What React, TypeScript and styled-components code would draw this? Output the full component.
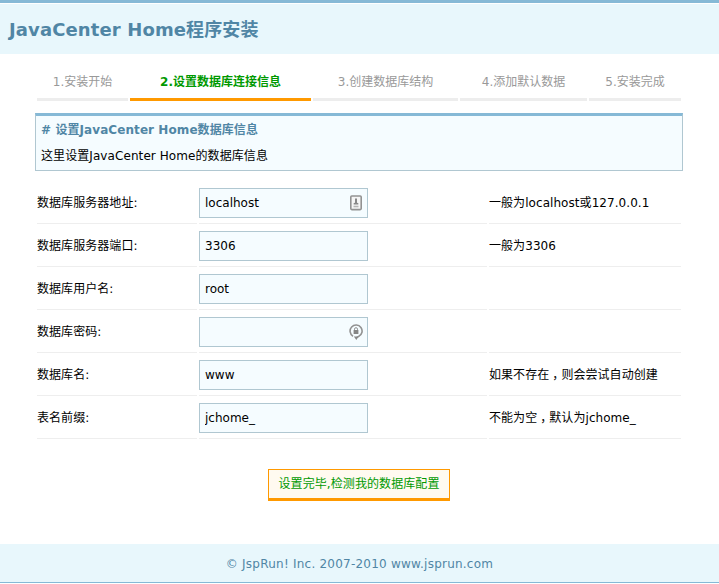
import React from "react";
import styled, { createGlobalStyle } from "styled-components";

const GlobalStyle = createGlobalStyle`
  *, *::before, *::after { box-sizing: border-box; }
  body {
    margin: 0;
    background: #fff;
    color: #000;
    font-family: Verdana, "DejaVu Sans", "Noto Sans CJK SC", sans-serif;
    font-size: 12px;
    line-height: 18px;
  }
`;

const Page = styled.div`
  height: 584px;
  display: flex;
  flex-direction: column;
  overflow: hidden;
`;

const Header = styled.header`
  height: 54px;
  flex: none;
  border-top: 3px solid #86b9d6;
  padding-top: 1px;
  background: #e8f7fc content-box;
`;

const Title = styled.h1`
  margin: 0;
  padding-left: 9px;
  font-size: 18px;
  line-height: 52px;
  height: 50px;
  font-weight: bold;
  letter-spacing: 0.12px;
  color: #5086a5;
`;

const Main = styled.main`
  width: 648px;
  margin: 0 0 0 35px;
  flex: 1;
  display: flex;
  flex-direction: column;
`;

const Steps = styled.ol`
  list-style: none;
  margin: 10px 2px 0;
  padding: 0;
  display: grid;
  grid-template-columns: 91px 181px 145px 127px 92px;
  column-gap: 2px;
`;

const Step = styled.li<{ $active?: boolean }>`
  height: 37px;
  line-height: 37px;
  text-align: center;
  white-space: nowrap;
  color: ${(p) => (p.$active ? "#090" : "#999")};
  font-weight: ${(p) => (p.$active ? "bold" : "normal")};
  border-bottom: 3px solid ${(p) => (p.$active ? "#f90" : "#ededed")};
`;

const Notice = styled.section`
  height: 58px;
  margin-top: 12px;
  padding: 5px 5px 0;
  border: 1px solid #b0c7d1;
  border-top: 3px solid #86b9d6;
  background: #f5fcff;
  letter-spacing: 0.08px;
`;

const NoticeTitle = styled.h2`
  margin: 0 0 8px;
  font-size: 12px;
  line-height: 18px;
  color: #5086a5;
`;

const NoticeText = styled.p`
  margin: 0;
`;

const Form = styled.form`
  margin: 10px 2px 0;
  letter-spacing: 0.06px;
`;

const Row = styled.div`
  display: grid;
  grid-template-columns: 160px 288px 192px;
  column-gap: 2px;
  height: 43px;
`;

const Cell = styled.div`
  display: flex;
  align-items: center;
  padding-top: 2px;
  border-bottom: 1px solid #eee;
  white-space: nowrap;
`;

const Field = styled.div`
  width: 169px;
  height: 30px;
  display: flex;
  align-items: center;
  padding-right: 4px;
  border: 1px solid #b0c7d1;
  background: #f5fcff;
`;

const Input = styled.input`
  flex: 1;
  min-width: 0;
  height: 28px;
  padding: 0 0 0 5px;
  border: 0;
  outline: 0;
  background: transparent;
  color: #000;
  font: inherit;
`;

const CenteredComma = styled.span`
  font-feature-settings: "halt";
  padding: 0 3px;
`;

const Actions = styled.div`
  display: flex;
  justify-content: center;
  padding-top: 30px;
`;

const Submit = styled.button`
  width: 182px;
  height: 32px;
  padding: 0;
  border: 1px solid #f90;
  border-bottom-width: 3px;
  background: #fffaf0;
  color: #090;
  font: inherit;
  letter-spacing: 0.08px;
  white-space: nowrap;
`;

const Footer = styled.footer`
  height: 39px;
  flex: none;
  margin-bottom: 1px;
  border-bottom: 1px solid #86b9d6;
  background: #e8f7fc;
  color: #5086a5;
  text-align: center;
  line-height: 40px;
  letter-spacing: 0.23px;
`;

const UserIcon = () => (
  <svg width="14" height="16" viewBox="0 0 14 16" fill="none">
    <rect x="1.8" y="1" width="10.4" height="13.6" rx="1" fill="#f5f5f5" stroke="#929292" strokeWidth="1.6" />
    <path d="M7 3.6v4" stroke="#888" strokeWidth="2" />
    <path d="M4.7 9.5V8h1l.6-1.4h1.4L8.3 8h1v1.5z" fill="#888" />
    <path d="M4.5 11.5h5" stroke="#b5b5b5" strokeWidth="1.6" />
  </svg>
);

const LockIcon = () => (
  <svg width="14" height="16" viewBox="0 0 14 16" fill="none">
    <path d="M4 12.2A6 6 0 1 1 9.6 12.5L7.5 13.6" stroke="#929292" strokeWidth="1.6" />
    <path d="M4.8 12.6h4.6L7.4 16z" fill="#888" />
    <path d="M5.5 7V5.2a1.5 1.5 0 0 1 3 0V7" stroke="#929292" />
    <rect x="4.6" y="6" width="4.8" height="4" fill="#858585" />
  </svg>
);

const steps = ["1.安装开始", "2.设置数据库连接信息", "3.创建数据库结构", "4.添加默认数据", "5.安装完成"];

type FieldRow = {
  label: string;
  value: string;
  hint?: React.ReactNode;
  password?: boolean;
  icon?: React.ReactNode;
};

const rows: FieldRow[] = [
  { label: "数据库服务器地址:", value: "localhost", hint: "一般为localhost或127.0.0.1", icon: <UserIcon /> },
  { label: "数据库服务器端口:", value: "3306", hint: "一般为3306" },
  { label: "数据库用户名:", value: "root" },
  { label: "数据库密码:", value: "", password: true, icon: <LockIcon /> },
  {
    label: "数据库名:",
    value: "www",
    hint: <span>如果不存在<CenteredComma>，</CenteredComma>则会尝试自动创建</span>,
  },
  {
    label: "表名前缀:",
    value: "jchome_",
    hint: <span>不能为空<CenteredComma>，</CenteredComma>默认为jchome_</span>,
  },
];

export default function App() {
  return (
    <Page lang="zh-CN">
      <GlobalStyle />
      <Header>
        <Title>JavaCenter Home程序安装</Title>
      </Header>
      <Main>
        <Steps>
          {steps.map((s, i) => (
            <Step key={s} $active={i === 1}>{s}</Step>
          ))}
        </Steps>
        <Notice>
          <NoticeTitle># 设置JavaCenter Home数据库信息</NoticeTitle>
          <NoticeText>这里设置JavaCenter Home的数据库信息</NoticeText>
        </Notice>
        <Form onSubmit={(e) => e.preventDefault()}>
          {rows.map((r) => (
            <Row key={r.label}>
              <Cell>{r.label}</Cell>
              <Cell>
                <Field>
                  <Input type={r.password ? "password" : "text"} defaultValue={r.value} aria-label={r.label} />
                  {r.icon}
                </Field>
              </Cell>
              <Cell>{r.hint}</Cell>
            </Row>
          ))}
          <Actions>
            <Submit type="submit">设置完毕,检测我的数据库配置</Submit>
          </Actions>
        </Form>
      </Main>
      <Footer>© JspRun! Inc. 2007-2010 www.jsprun.com</Footer>
    </Page>
  );
}
